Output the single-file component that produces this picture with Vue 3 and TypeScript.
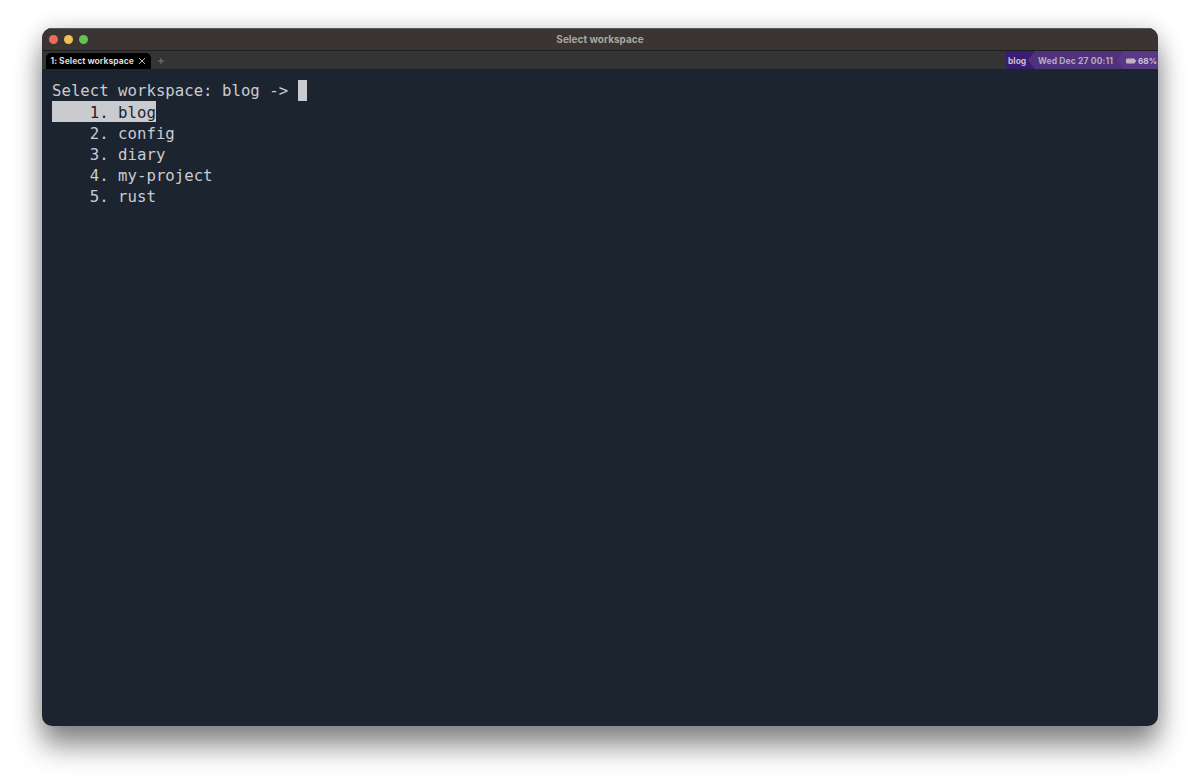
<script setup lang="ts">
const items: string[] = ['blog', 'config', 'diary', 'my-project', 'rust']
const prompt = 'Select workspace: blog -> '
const rows: string[] = items.map((item, i) => `    ${i + 1}. ${item}`)
</script>

<template>
  <div class="page">
    <div class="window">
      <header class="titlebar">
        <div class="lights">
          <span class="light red"></span>
          <span class="light yellow"></span>
          <span class="light green"></span>
        </div>
        <div class="title">Select workspace</div>
      </header>
      <div class="tabbar">
        <div class="tab">
          <span>1: Select workspace</span>
          <svg class="close" width="8" height="8" viewBox="0 0 8 8"><path d="M1 1l6 6M7 1L1 7" stroke="#b8b8b8" stroke-width="1" fill="none" /></svg>
        </div>
        <svg class="plus" width="6" height="6" viewBox="0 0 6 6"><path d="M3 0v6M0 3h6" stroke="#77787a" stroke-width="1" fill="none" /></svg>
        <div class="status">
          <div class="seg seg-a">blog</div>
          <div class="seg seg-b">Wed Dec 27 00:11</div>
          <div class="seg seg-c">
            <svg width="10" height="6" viewBox="0 0 10 6"><rect x="0" y="0.5" width="9" height="5" rx="1.2" fill="#bdb5c6" /><rect x="9.2" y="2" width="0.8" height="2" fill="#bdb5c6" /></svg>
            <span>68%</span>
          </div>
        </div>
      </div>
      <main class="term">
        <div class="line">{{ prompt }}<span class="cursor"></span></div>
        <div v-for="(row, i) in rows" :key="row" class="line">
          <span class="row" :class="{ sel: i === 0 }">{{ row }}</span>
        </div>
      </main>
    </div>
  </div>
</template>

<style scoped>
.page {
  box-sizing: border-box;
  height: 782px;
  padding: 28px 42px 56px;
  background: #fff;
  overflow: hidden;
}
.window {
  height: 100%;
  display: flex;
  flex-direction: column;
  border-radius: 10px;
  overflow: hidden;
  background: #1c2430;
  box-shadow: 0 20px 28px rgba(0, 0, 0, 0.45), 0 0 22px rgba(0, 0, 0, 0.16);
}
.titlebar {
  position: relative;
  flex: 0 0 23px;
  display: flex;
  align-items: center;
  justify-content: center;
  padding-bottom: 2px;
  background: #3a3432;
  border-top: 1px solid #5c5856;
  border-bottom: 1px solid #1f1d1d;
  box-sizing: border-box;
}
.lights {
  position: absolute;
  left: 6.5px;
  top: 5.5px;
  display: flex;
  gap: 6px;
}
.light {
  width: 9px;
  height: 9px;
  border-radius: 50%;
}
.red { background: #ec6a5e; }
.yellow { background: #f4bf4f; }
.green { background: #61c554; }
.title {
  font: 700 10px "Inter", "Liberation Sans", sans-serif;
  color: #a9a6a4;
}
.tabbar {
  flex: 0 0 18px;
  display: flex;
  align-items: stretch;
  background: #343434;
  font: 700 8.5px "Inter", "Liberation Sans", sans-serif;
  color: #d0d0d0;
}
.tab {
  margin-left: 4px;
  margin-top: 2px;
  width: 105px;
  box-sizing: border-box;
  padding-left: 4.5px;
  display: flex;
  align-items: center;
  gap: 4px;
  background: #000;
  border-radius: 5px 5px 0 0;
  color: #d8d8d8;
  letter-spacing: 0.03px;
  white-space: nowrap;
}
.close { flex: none; }
.plus {
  margin: 7px 0 0 7px;
}
.status {
  margin-left: auto;
  display: flex;
  align-items: stretch;
}
.seg {
  display: flex;
  align-items: center;
  padding-top: 1px;
  white-space: nowrap;
}
.seg-a {
  width: 29px;
  padding-left: 2px;
  box-sizing: border-box;
  background: #3a1c72;
  color: #c6bfd0;
}
.seg-b {
  width: 97px;
  margin-left: -7px;
  padding-left: 10px;
  box-sizing: border-box;
  background: #50327a;
  color: #b5adc0;
  letter-spacing: 0.13px;
  clip-path: polygon(0 50%, 7px 0, 100% 0, 100% 100%, 7px 100%);
}
.seg-c {
  width: 41px;
  margin-left: -8px;
  padding-left: 9px;
  gap: 2px;
  box-sizing: border-box;
  background: #5a3888;
  color: #c8c1d0;
  font-size: 8.2px;
  clip-path: polygon(0 50%, 7px 0, 100% 0, 100% 100%, 7px 100%);
}
.term {
  flex: 1;
  padding: 11px 10px;
  font: 400 15.7px/21px "DejaVu Sans Mono", "Liberation Mono", monospace;
  color: #c9ccd1;
  white-space: pre;
}
.line {
  height: 21px;
}
.cursor {
  display: inline-block;
  width: 9.4px;
  height: 21px;
  vertical-align: top;
  background: #c9cbcf;
}
.row {
  display: block;
  width: fit-content;
  height: 21px;
  line-height: 23px;
}
.sel {
  background: #c9cbcf;
  color: #1c2430;
}
</style>
